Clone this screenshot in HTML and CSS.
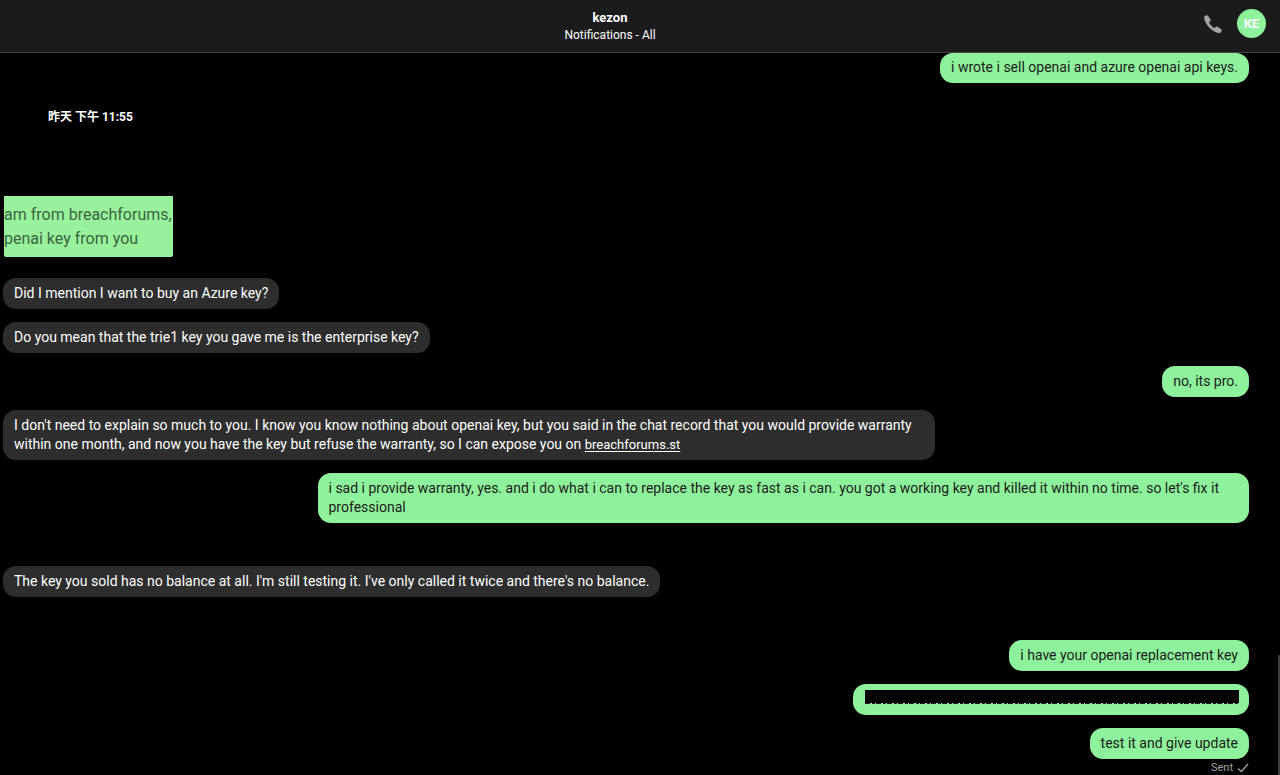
FILE: index.html
```html
<!DOCTYPE html>
<html lang="en">
<head>
  <meta charset="UTF-8">
  <meta name="viewport" content="width=device-width, initial-scale=1.0">
  <title>kezon</title>
  <link rel="stylesheet" href="styles.css">
</head>
<body>
  <!-- Conversation header -->
  <header class="header">
    <div class="header-title">
      <h1>kezon</h1>
      <p>Notifications - All</p>
    </div>
    <div class="header-actions">
      <button class="call-btn" type="button" aria-label="Call">
        <svg width="18" height="18" viewBox="0 0 18 18">
          <path d="M1.1.8C2 .1 3.300-.1 4.100.9L6.300 4.100C6.900 5 6.700 5.900 6 6.500L5 7.300C5.800 9.600 8 12 10.400 13.200L11.300 12.100C11.900 11.400 12.800 11.300 13.600 11.800L16.900 13.900C17.900 14.600 18 15.900 17.200 16.800L16.400 17.500C15.700 18.100 14.700 18.100 13.700 17.800C7.300 15.700 2.200 10.500.300 4.200C0 2.900 0 1.800 1.100.8Z" fill="#a3a3a3"/>
        </svg>
      </button>
      <button class="avatar" type="button">KE</button>
    </div>
  </header>

  <!-- Messages -->
  <main class="messages">
    <div class="message outgoing">i wrote i sell openai and azure openai api keys.</div>

    <figure class="attachment">
      <figcaption>昨天 下午 11:55</figcaption>
      <p>am from breachforums,<br>penai key from you</p>
    </figure>

    <div class="message incoming">Did I mention I want to buy an Azure key?</div>
    <div class="message incoming">Do you mean that the trie1 key you gave me is the enterprise key?</div>
    <div class="message outgoing">no, its pro.</div>
    <div class="message incoming">I don't need to explain so much to you. I know you know nothing about openai key, but you said in the chat record that you would provide warranty within one month, and now you have the key but refuse the warranty, so I can expose you on <a href="#">breachforums.st</a></div>
    <div class="message outgoing">i sad i provide warranty, yes. and i do what i can to replace the key as fast as i can. you got a working key and killed it within no time. so let's fix it professional</div>
    <div class="message incoming spaced">The key you sold has no balance at all. I'm still testing it. I've only called it twice and there's no balance.</div>
    <div class="message outgoing spaced">i have your openai replacement key</div>
    <div class="message outgoing redacted"><span class="redaction"></span></div>
    <div class="message outgoing">test it and give update</div>
    <div class="status">
      Sent
      <svg width="12" height="10" viewBox="0 0 12 10">
        <path d="M1 5.500L4.300 8.500L11 1" fill="none" stroke="#a0a0a0" stroke-width="1.300"/>
      </svg>
    </div>
    <div class="scroll-thumb"></div>
  </main>
</body>
</html>
```
FILE: styles.css
```css
* {
  box-sizing: border-box;
}
body {
  margin: 0;
  height: 100vh;
  display: flex;
  flex-direction: column;
  overflow: hidden;
  background: #000;
  color: #fff;
  font-family: Roboto, "Noto Sans CJK SC", sans-serif;
  font-size: 14px;
  line-height: 19px;
}
button {
  border: none;
  padding: 0;
  font-family: inherit;
  cursor: pointer;
}

/* Header */
.header {
  flex: none;
  display: flex;
  align-items: flex-start;
  padding: 9px 14px 9px 0;
  background: #1b1b1b;
  border-bottom: 1px solid #414141;
}
.header-title {
  flex: 1;
  padding-left: 16px;
  text-align: center;
}
.header-title h1 {
  margin: 0;
  font-size: 13px;
  font-weight: 700;
  line-height: 18px;
}
.header-title p {
  margin: 0;
  font-size: 12px;
  line-height: 16px;
}
.header-actions {
  display: flex;
  align-items: center;
  gap: 15px;
}
.call-btn {
  display: flex;
  background: none;
}
.avatar {
  width: 29px;
  height: 29px;
  border-radius: 50%;
  background: #8ef29c;
  color: #fff;
  font-size: 13px;
  font-weight: 700;
}

/* Messages */
.messages {
  position: relative;
  flex: 1;
  min-height: 0;
  display: flex;
  flex-direction: column;
  gap: 13px;
  padding: 0 31px 0 3px;
  overflow: hidden;
}
.message {
  flex: none;
  max-width: calc(75% - 3px);
  padding: 6px 11px;
  border-radius: 13px;
}
.incoming {
  align-self: flex-start;
  background: #2d2d2d;
}
.outgoing {
  align-self: flex-end;
  background: #8ef29c;
  color: #1b1b1b;
}
.outgoing:first-child {
  padding-top: 5px;
}
.spaced {
  margin-top: 30px;
}
.message a {
  color: #fff;
  font-size: 13px;
  text-underline-offset: 2px;
}
.redacted {
  height: 31px;
  width: 396px;
  padding: 6px 10px 0 12px;
}
.redaction {
  display: block;
  height: 14px;
  background:
    repeating-linear-gradient(90deg, #1b1b1b 0 5px, #8ef29c 5px 7px, #1b1b1b 7px 10px, #8ef29c 10px 11px) bottom / 100% 1px no-repeat,
    #000;
}

/* Screenshot sent as an attachment */
.attachment {
  flex: none;
  width: 169px;
  margin: 12px 0 8px 1px;
}
.attachment figcaption {
  margin-bottom: 69px;
  padding-left: 44px;
  font-size: 12px;
  font-weight: 700;
}
.attachment p {
  margin: 0;
  padding: 7px 0 6px;
  border-radius: 0 0 2px 2px;
  background: #98f29c;
  color: #3c6344;
  font-size: 16px;
  line-height: 24px;
  white-space: nowrap;
}

.status {
  display: flex;
  align-items: center;
  align-self: flex-end;
  gap: 4px;
  margin-top: -13px;
  color: #a0a0a0;
  font-size: 11px;
  line-height: 17px;
}
.scroll-thumb {
  position: absolute;
  right: 0;
  bottom: 0;
  width: 2px;
  height: 120px;
  background: #3c3c3c;
}
```
